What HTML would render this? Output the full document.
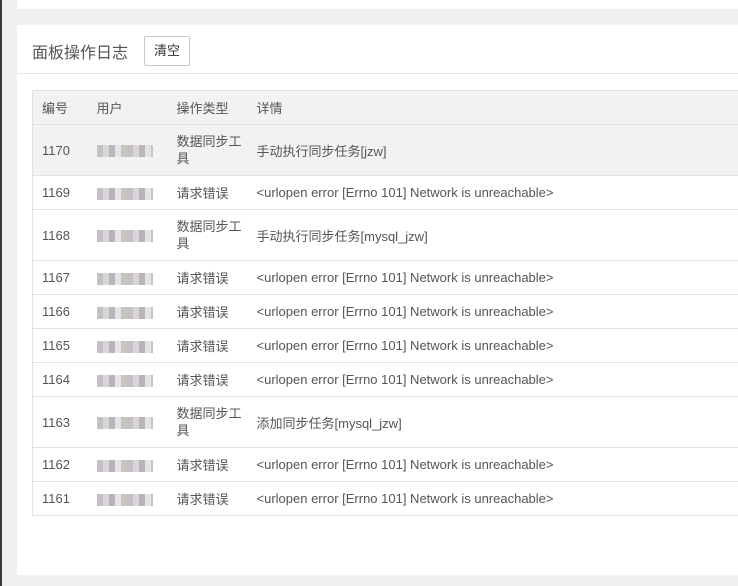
<!DOCTYPE html>
<html><head><meta charset="utf-8"><style>
*{margin:0;padding:0;box-sizing:border-box}
body{width:738px;height:586px;overflow:hidden;background:#f0f0f0;font-family:"Liberation Sans","Noto Sans CJK SC",sans-serif;position:relative}
.dark{position:absolute;left:0;top:0;width:2px;height:586px;background:#2f3a45}
.c1{position:absolute;left:17px;top:0;width:721px;height:9px;background:#fff}
.c2{position:absolute;left:17px;top:25px;width:721px;height:550px;background:#fff}
.hd{height:49px;border-bottom:1px solid #e8e8e8;position:relative}
.hd h2{position:absolute;left:15px;top:14px;font-size:16px;font-weight:normal;color:#555}
.btn{position:absolute;left:127px;top:11px;width:46px;height:30px;border:1px solid #c9c9c9;border-radius:2px;font-size:13px;color:#333;text-align:center;line-height:28px}
table{position:absolute;left:15px;top:65px;width:720px;border-collapse:collapse;font-size:13px;color:#555}
td,th{border-top:1px solid #e2e2e2;text-align:left;font-weight:normal;padding:0 0 0 9px;vertical-align:middle}
tr{height:34px}
tr.t{height:51px}
th{background:#f2f2f2;height:34px;border-top:1px solid #e2e2e2}
table{border-left:1px solid #e2e2e2;border-bottom:1px solid #e2e2e2}
tr.hv td{background:#f2f2f2}
td.n{width:55px}td.u{width:80px}td.ty{width:80px;line-height:17px}
.m{display:inline-block;width:56px;height:12px;vertical-align:middle;background:repeating-linear-gradient(90deg,#c4c0c4 0 6px,#d8d6da 6px 12px,#b8b4b8 12px 18px,#e2e4ea 18px 24px,#cac4c0 24px 30px)}
</style></head><body>
<div class="dark"></div>
<div class="c1"></div>
<div class="c2">
<div class="hd"><h2>面板操作日志</h2><div class="btn">清空</div></div>
<table>
<tr><th style="width:55px">编号</th><th style="width:80px">用户</th><th style="width:80px">操作类型</th><th>详情</th></tr>
<tr class="t hv"><td class="n">1170</td><td class="u"><span class="m"></span></td><td class="ty">数据同步工<br>具</td><td>手动执行同步任务[jzw]</td></tr>
<tr><td>1169</td><td><span class="m"></span></td><td>请求错误</td><td>&lt;urlopen error [Errno 101] Network is unreachable&gt;</td></tr>
<tr class="t"><td>1168</td><td><span class="m"></span></td><td class="ty">数据同步工<br>具</td><td>手动执行同步任务[mysql_jzw]</td></tr>
<tr><td>1167</td><td><span class="m"></span></td><td>请求错误</td><td>&lt;urlopen error [Errno 101] Network is unreachable&gt;</td></tr>
<tr><td>1166</td><td><span class="m"></span></td><td>请求错误</td><td>&lt;urlopen error [Errno 101] Network is unreachable&gt;</td></tr>
<tr><td>1165</td><td><span class="m"></span></td><td>请求错误</td><td>&lt;urlopen error [Errno 101] Network is unreachable&gt;</td></tr>
<tr><td>1164</td><td><span class="m"></span></td><td>请求错误</td><td>&lt;urlopen error [Errno 101] Network is unreachable&gt;</td></tr>
<tr class="t"><td>1163</td><td><span class="m"></span></td><td class="ty">数据同步工<br>具</td><td>添加同步任务[mysql_jzw]</td></tr>
<tr><td>1162</td><td><span class="m"></span></td><td>请求错误</td><td>&lt;urlopen error [Errno 101] Network is unreachable&gt;</td></tr>
<tr><td>1161</td><td><span class="m"></span></td><td>请求错误</td><td>&lt;urlopen error [Errno 101] Network is unreachable&gt;</td></tr>
</table>
</div>
</body></html>
